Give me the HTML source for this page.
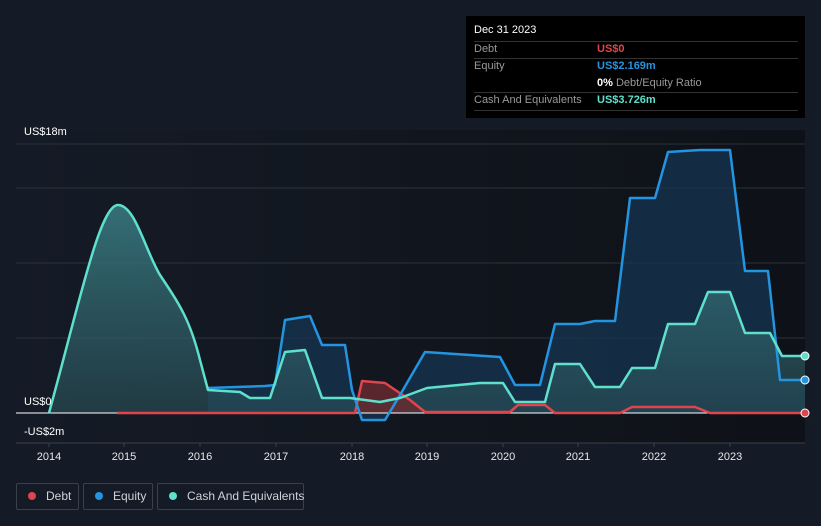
<!DOCTYPE html>
<html><head><meta charset="utf-8"><style>
html,body{margin:0;padding:0;background:#151b26;width:821px;height:526px;overflow:hidden;font-family:"Liberation Sans",sans-serif}
.tt{position:absolute;left:466px;top:16px;width:339px;height:102px;background:#000;color:#fff;font-size:11px}
.tt .r{position:absolute;left:8px;width:324px;border-top:1px solid #333}
.lg{position:absolute;top:483px;height:27px;border:1px solid #3a3f48;border-radius:2px;color:#cfd2d6;font-size:12px;line-height:25px;box-sizing:border-box;white-space:nowrap}
.lg i{display:inline-block;width:8px;height:8px;border-radius:50%;margin:0 10px 0 11px;vertical-align:0px}
</style></head><body>
<svg width="821" height="526" style="position:absolute;left:0;top:0">
<defs>
<linearGradient id="bg" x1="0" x2="1"><stop offset="0" stop-color="#151b26"/><stop offset="0.4" stop-color="#121720"/><stop offset="1" stop-color="#0e1117"/></linearGradient>
<linearGradient id="cf" x1="0" y1="0" x2="0" y2="1"><stop offset="0" stop-color="#3a7e86" stop-opacity="0.85"/><stop offset="1" stop-color="#2a5058" stop-opacity="0.6"/></linearGradient>
</defs>
<rect x="16" y="130" width="789" height="313" fill="url(#bg)"/>
<g stroke="#2c323c" stroke-width="1">
<line x1="16" y1="144" x2="805" y2="144"/><line x1="16" y1="188" x2="805" y2="188"/>
<line x1="16" y1="263" x2="805" y2="263"/><line x1="16" y1="338" x2="805" y2="338"/>
<line x1="16" y1="443" x2="805" y2="443" stroke="#3a3f48"/>
</g>
<path d="M208,388 L265,386 275,385 285,320 310,316 322,345 345,345 352,390 362,420 385,420 400,395 425,352 500,357 515,385 540,385 555,324 580,324 595,321 615,321 630,198 655,198 668,152 700,150 730,150 745,271 768,271 780,380 805,380 L805,413 208,413Z" fill="#153552" fill-opacity="0.75"/>
<path d="M49,413 C80,300 100,205 118,205 C135,205 145,250 160,275 C180,305 190,320 200,360 L208,390 240,392 250,398 270,398 285,352 305,350 322,398 350,398 380,402 400,398 427,388 480,383 503,383 515,402 545,402 555,364 580,364 595,387 620,387 632,368 655,368 668,324 695,324 708,292 730,292 745,333 770,333 782,356 805,356 L805,413 49,413Z" fill="url(#cf)"/>
<path d="M355,413 362,381 385,383 410,400 425,412 Z" fill="#6a2a30" fill-opacity="0.8"/>
<line x1="16" y1="413" x2="805" y2="413" stroke="#fff" stroke-width="1"/>
<g fill="none" stroke-width="2.5" stroke-linejoin="round">
<path d="M117,413 L355,413 362,381 385,383 410,400 425,412 510,412 518,405 545,405 555,413 620,413 632,407 695,407 710,413 805,413" stroke="#e0444c"/>
<path d="M208,388 L265,386 275,385 285,320 310,316 322,345 345,345 352,390 362,420 385,420 400,395 425,352 500,357 515,385 540,385 555,324 580,324 595,321 615,321 630,198 655,198 668,152 700,150 730,150 745,271 768,271 780,380 805,380" stroke="#2394e0"/>
<path d="M49,413 C80,300 100,205 118,205 C135,205 145,250 160,275 C180,305 190,320 200,360 L208,390 240,392 250,398 270,398 285,352 305,350 322,398 350,398 380,402 400,398 427,388 480,383 503,383 515,402 545,402 555,364 580,364 595,387 620,387 632,368 655,368 668,324 695,324 708,292 730,292 745,333 770,333 782,356 805,356" stroke="#5ee0cc"/>
</g>
<circle cx="805" cy="356" r="4" fill="#5ee0cc" stroke="#fff"/>
<circle cx="805" cy="380" r="4" fill="#2394e0" stroke="#fff"/>
<circle cx="805" cy="413" r="4" fill="#e0444c" stroke="#fff"/>
<g fill="#fff" font-size="11" font-family="Liberation Sans">
<text x="24" y="135">US$18m</text><text x="24" y="405">US$0</text><text x="24" y="435">-US$2m</text>
</g>
<g fill="#e6e8ea" font-size="11" text-anchor="middle" font-family="Liberation Sans">
<text x="49" y="460">2014</text><text x="124" y="460">2015</text><text x="200" y="460">2016</text><text x="276" y="460">2017</text><text x="352" y="460">2018</text><text x="427" y="460">2019</text><text x="503" y="460">2020</text><text x="578" y="460">2021</text><text x="654" y="460">2022</text><text x="730" y="460">2023</text>
</g>
<g stroke="#3a3f48"><line x1="49" y1="443" x2="49" y2="447"/><line x1="124" y1="443" x2="124" y2="447"/><line x1="200" y1="443" x2="200" y2="447"/><line x1="276" y1="443" x2="276" y2="447"/><line x1="352" y1="443" x2="352" y2="447"/><line x1="427" y1="443" x2="427" y2="447"/><line x1="503" y1="443" x2="503" y2="447"/><line x1="578" y1="443" x2="578" y2="447"/><line x1="654" y1="443" x2="654" y2="447"/><line x1="730" y1="443" x2="730" y2="447"/></g>
</svg>
<div class="tt">
<div style="position:absolute;left:8px;top:8px">Dec 31 2023</div>
<div class="r" style="top:25px"></div>
<div style="position:absolute;left:8px;top:27px;color:#999">Debt</div><div style="position:absolute;left:131px;top:27px;color:#e0444c;font-weight:bold">US$0</div>
<div class="r" style="top:42px"></div>
<div style="position:absolute;left:8px;top:44px;color:#999">Equity</div><div style="position:absolute;left:131px;top:44px;color:#2394e0;font-weight:bold">US$2.169m</div>
<div style="position:absolute;left:131px;top:61px;color:#999"><b style="color:#fff">0%</b> Debt/Equity Ratio</div>
<div class="r" style="top:76px"></div>
<div style="position:absolute;left:8px;top:78px;color:#999">Cash And Equivalents</div><div style="position:absolute;left:131px;top:78px;color:#5ee0cc;font-weight:bold">US$3.726m</div>
<div class="r" style="top:94px"></div>
</div>
<div class="lg" style="left:16px;width:63px"><i style="background:#e0444c"></i>Debt</div>
<div class="lg" style="left:83px;width:70px"><i style="background:#2394e0"></i>Equity</div>
<div class="lg" style="left:157px;width:147px"><i style="background:#5ee0cc"></i>Cash And Equivalents</div>
</body></html>
